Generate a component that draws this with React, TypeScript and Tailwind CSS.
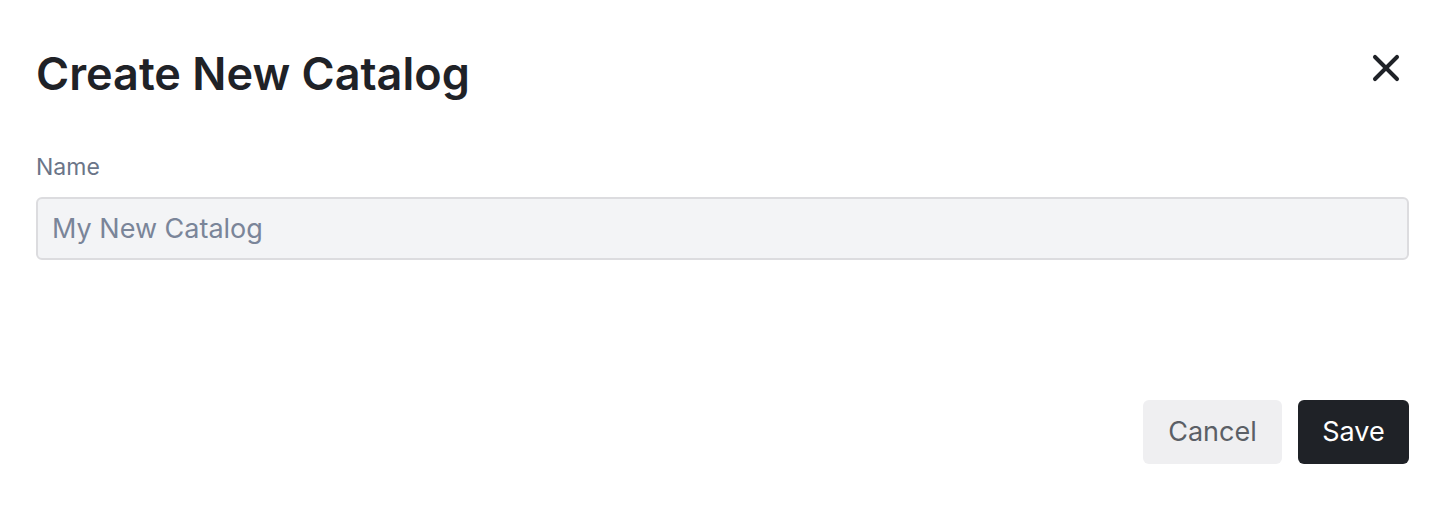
import { X } from 'lucide-react'

export default function App() {
  return (
    <div
      className="w-[1456px] h-[506px] bg-white px-[36px] pt-[44px] flex flex-col"
      style={{ fontFamily: 'Inter, "Noto Sans", sans-serif' }}
    >
      <div className="flex items-start justify-between">
        <h1 className="text-[45px] leading-[60px] font-semibold text-[#1f2227]">
          Create New Catalog
        </h1>
        <button className="mr-[12px] mt-[2px] text-[#1f2227]">
          <X className="w-[44px] h-[44px]" strokeWidth={2.2} />
        </button>
      </div>

      <label className="mt-[48px] text-[23px] leading-[30px] text-[#6b7588]">Name</label>
      <input
        className="mt-[15px] h-[63px] w-[1373px] rounded-[6px] border-2 border-[#dcdcdf] bg-[#f3f4f6] px-[14px] text-[27px] text-[#1f2227] placeholder:text-[#7a8599] outline-none"
        placeholder="My New Catalog"
      />

      <div className="mt-auto mb-[42px] flex justify-end gap-[16px] pr-[11px]">
        <button className="h-[64px] w-[139px] rounded-[6px] bg-[#efeff1] text-[27px] text-[#5b5f66]">
          Cancel
        </button>
        <button className="h-[64px] w-[111px] rounded-[6px] bg-[#1f2227] text-[27px] text-white">
          Save
        </button>
      </div>
    </div>
  )
}
